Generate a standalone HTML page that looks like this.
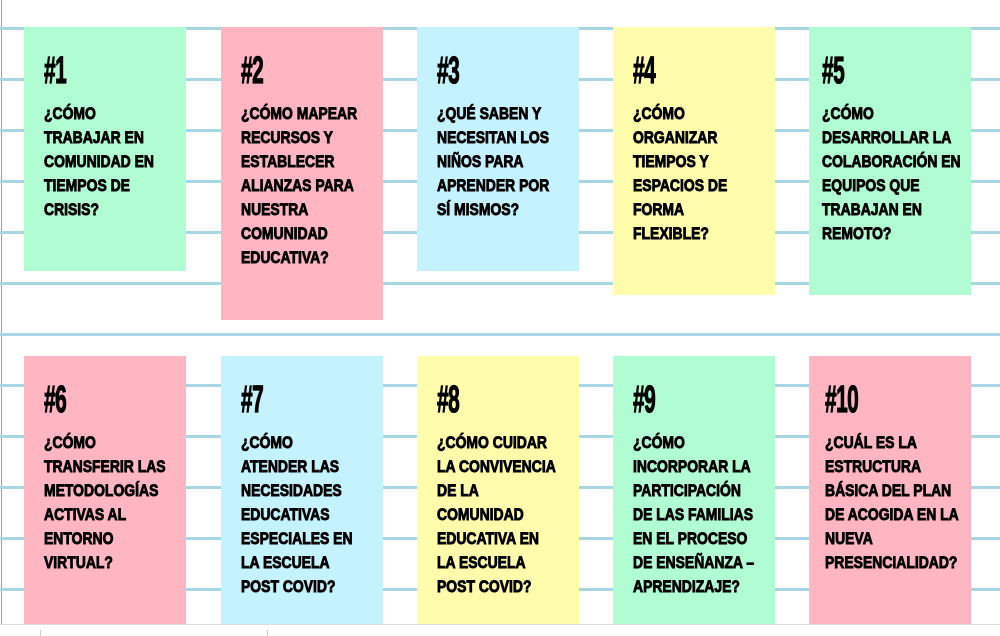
<!DOCTYPE html>
<html><head><meta charset="utf-8"><style>
body{margin:0;width:1000px;height:636px;background:#fff;position:relative;overflow:hidden;font-family:"Liberation Sans",sans-serif}
.l{position:absolute;left:0;width:1000px;height:3px;background:#a9d6e3}
.c{position:absolute;width:162px}
.h{position:absolute;top:24px;font-weight:bold;font-size:38px;line-height:40px;transform:scaleX(.55);transform-origin:left top;color:#000;letter-spacing:-1px;-webkit-text-stroke:1.2px #000}
.t{position:absolute;top:75px;font-weight:bold;font-size:17px;line-height:24px;transform:scaleX(.82);transform-origin:left top;white-space:nowrap;color:#000;-webkit-text-stroke:0.9px #000}
.g{background:#b1fdd3}.p{background:#ffb6c2}.b{background:#c4f3fd}.y{background:#fffdab}
</style></head><body>
<div style="position:absolute;left:1px;top:0;width:1px;height:625px;background:#f08080"></div>
<div class="l" style="top:27px"></div><div class="l" style="top:78px"></div><div class="l" style="top:129px"></div><div class="l" style="top:180px"></div><div class="l" style="top:231px"></div><div class="l" style="top:282px"></div>
<div class="l" style="top:333px"></div><div class="l" style="top:384px"></div><div class="l" style="top:435px"></div><div class="l" style="top:486px"></div><div class="l" style="top:537px"></div><div class="l" style="top:588px"></div>
<div style="position:absolute;left:0;top:624px;width:1000px;height:1px;background:#ddd"></div>
<div style="position:absolute;left:40px;top:630px;width:1px;height:6px;background:#ccc"></div>
<div style="position:absolute;left:267px;top:630px;width:1px;height:6px;background:#ccc"></div>

<div class="c g" style="left:24px;top:27px;height:244px"><div class="h" style="left:20px">#1</div><div class="t" style="left:20px">¿CÓMO<br>TRABAJAR EN<br>COMUNIDAD EN<br>TIEMPOS DE<br>CRISIS?</div></div>
<div class="c p" style="left:221px;top:27px;height:293px"><div class="h" style="left:20px">#2</div><div class="t" style="left:20px">¿CÓMO MAPEAR<br>RECURSOS Y<br>ESTABLECER<br>ALIANZAS PARA<br>NUESTRA<br>COMUNIDAD<br>EDUCATIVA?</div></div>
<div class="c b" style="left:417px;top:27px;height:244px"><div class="h" style="left:20px">#3</div><div class="t" style="left:20px">¿QUÉ SABEN Y<br>NECESITAN LOS<br>NIÑOS PARA<br>APRENDER POR<br>SÍ MISMOS?</div></div>
<div class="c y" style="left:613px;top:27px;height:268px"><div class="h" style="left:20px">#4</div><div class="t" style="left:20px">¿CÓMO<br>ORGANIZAR<br>TIEMPOS Y<br>ESPACIOS DE<br>FORMA<br>FLEXIBLE?</div></div>
<div class="c g" style="left:809px;top:27px;height:268px"><div class="h" style="left:13px">#5</div><div class="t" style="left:13px">¿CÓMO<br>DESARROLLAR LA<br>COLABORACIÓN EN<br>EQUIPOS QUE<br>TRABAJAN EN<br>REMOTO?</div></div>

<div class="c p" style="left:24px;top:356px;height:268px"><div class="h" style="left:20px">#6</div><div class="t" style="left:20px">¿CÓMO<br>TRANSFERIR LAS<br>METODOLOGÍAS<br>ACTIVAS AL<br>ENTORNO<br>VIRTUAL?</div></div>
<div class="c b" style="left:221px;top:356px;height:268px"><div class="h" style="left:20px">#7</div><div class="t" style="left:20px">¿CÓMO<br>ATENDER LAS<br>NECESIDADES<br>EDUCATIVAS<br>ESPECIALES EN<br>LA ESCUELA<br>POST COVID?</div></div>
<div class="c y" style="left:417px;top:356px;height:268px"><div class="h" style="left:20px">#8</div><div class="t" style="left:20px">¿CÓMO CUIDAR<br>LA CONVIVENCIA<br>DE LA<br>COMUNIDAD<br>EDUCATIVA EN<br>LA ESCUELA<br>POST COVID?</div></div>
<div class="c g" style="left:613px;top:356px;height:268px"><div class="h" style="left:20px">#9</div><div class="t" style="left:20px">¿CÓMO<br>INCORPORAR LA<br>PARTICIPACIÓN<br>DE LAS FAMILIAS<br>EN EL PROCESO<br>DE ENSEÑANZA –<br>APRENDIZAJE?</div></div>
<div class="c p" style="left:809px;top:356px;height:268px"><div class="h" style="left:16px">#10</div><div class="t" style="left:16px">¿CUÁL ES LA<br>ESTRUCTURA<br>BÁSICA DEL PLAN<br>DE ACOGIDA EN LA<br>NUEVA<br>PRESENCIALIDAD?</div></div>
</body></html>
